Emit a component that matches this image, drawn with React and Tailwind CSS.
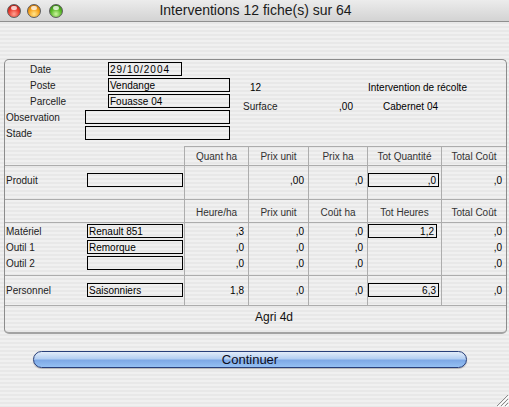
import React from "react";

const grid = "grid grid-cols-[179px_64px_60px_59px_74px_65px]";

function Box({ w, right, className = "", children }) {
  return (
    <div
      className={`h-[14px] border border-black flex items-center pt-[1px] text-[10px] leading-none text-black ${
        right ? "justify-end pr-[2px]" : "pl-[1px]"
      } ${w} ${className}`}
    >
      {children}
    </div>
  );
}

function Cell({ i, top = true, className = "", children }) {
  return (
    <div
      className={`${top ? "border-t" : ""} ${i > 0 ? "border-l" : ""} border-[#adadad] ${className}`}
    >
      {children}
    </div>
  );
}

function Light({ color }) {
  return (
    <span
      className={`relative block w-[14px] h-[14px] rounded-full border border-[#5e5e5e] ${color}`}
    >
      <span className="absolute left-[3px] top-[1px] w-[6px] h-[4px] rounded-full bg-white/75" />
    </span>
  );
}

const head = "flex items-center justify-center text-[10px] text-[#333]";
const num = "flex items-center justify-end pr-[4px] text-[10px] text-black";

function BodyRow({ label, box, values, tot, h, top }) {
  const extra = h === "last" ? "h-[20px] pb-[4px]" : top ? "h-[17px]" : "h-[16px]";
  return (
    <div className={grid}>
      <Cell i={0} top={top} className={`${extra} flex items-center`}>
        <span className="w-[82px] pl-[1px] text-[10px] text-[#222]">{label}</span>
        <Box w="w-[96px]">{box}</Box>
      </Cell>
      {values.map((v, k) => (
        <Cell key={k} i={k + 1} top={top} className={`${extra} ${num}`}>
          {k === 3 ? (
            tot !== undefined ? (
              <Box w="w-[71px]" right className="mr-auto">
                {tot}
              </Box>
            ) : null
          ) : (
            v
          )}
        </Cell>
      ))}
    </div>
  );
}

export default function App() {
  return (
    <div
      className="relative w-[509px] h-[407px] overflow-hidden bg-[repeating-linear-gradient(to_bottom,#f0f0f0_0px,#f0f0f0_2px,#e8e8e8_2px,#e8e8e8_4px)]"
      style={{ fontFamily: '"Liberation Sans", Arial, sans-serif' }}
    >
      {/* title bar */}
      <div className="h-[22px] border-b border-[#8f8f8f] bg-linear-to-b from-[#ececec] to-[#d3d3d3] flex items-center relative">
        <div className="flex items-center pl-[7px] pt-[1px]">
          <Light color="bg-[radial-gradient(circle_at_50%_75%,#ffa494_0%,#ea3a2e_50%,#9c110a_100%)]" />
          <span className="ml-[6px]">
            <Light color="bg-[radial-gradient(circle_at_50%_75%,#ffe68f_0%,#f7a11a_50%,#b35f00_100%)]" />
          </span>
          <span className="ml-[8px]">
            <Light color="bg-[radial-gradient(circle_at_50%_75%,#cdf59f_0%,#58b826_50%,#2a720a_100%)]" />
          </span>
        </div>
        <div className="absolute inset-0 flex items-center justify-center text-[14px] text-[#1a1a1a] pl-[2px]">
          Interventions 12 fiche(s) sur 64
        </div>
      </div>

      {/* panel */}
      <div className="mt-[37px] ml-[4px] w-[503px] rounded-[5px] border border-[#8c8c8c] border-b-2 border-b-[#a3a3a3]">
        <div className="h-[86px] pt-[2px] flex flex-col gap-[2px] text-[10px] text-[#222]">
          <div className="h-[14px] flex items-center">
            <span className="w-[103px] pl-[25px]">Date</span>
            <Box w="w-[74px]" className="tracking-[1px]">29/10/2004</Box>
          </div>
          <div className="h-[14px] flex items-center">
            <span className="w-[103px] pl-[25px]">Poste</span>
            <Box w="w-[122px]">Vendange</Box>
            <span className="ml-[20px] w-[118px] translate-y-[2px] text-black">12</span>
            <span className="translate-y-[2px] text-black">Intervention de récolte</span>
          </div>
          <div className="h-[14px] flex items-center">
            <span className="w-[103px] pl-[25px]">Parcelle</span>
            <Box w="w-[122px]">Fouasse 04</Box>
            <span className="ml-[13px] w-[60px] translate-y-[5px]">Surface</span>
            <span className="w-[50px] text-right translate-y-[5px] text-black">,00</span>
            <span className="ml-[30px] translate-y-[5px] text-black">Cabernet 04</span>
          </div>
          <div className="h-[14px] flex items-center">
            <span className="w-[80px] pl-[1px]">Observation</span>
            <Box w="w-[145px]" />
          </div>
          <div className="h-[14px] flex items-center">
            <span className="w-[80px] pl-[1px]">Stade</span>
            <Box w="w-[145px]" />
          </div>
        </div>

        {/* products */}
        <div className={grid}>
          <Cell i={0} top={false} className="h-[19px]" />
          {["Quant ha", "Prix unit", "Prix ha", "Tot Quantité", "Total Coût"].map((t, k) => (
            <Cell key={t} i={k + 1} className={`h-[19px] ${head}`}>
              {t}
            </Cell>
          ))}
        </div>
        <div className={grid}>
          <Cell i={0} className="h-[34px] flex items-start pt-[7px]">
            <span className="w-[82px] pl-[1px] h-[14px] flex items-center text-[10px] text-[#222]">Produit</span>
            <Box w="w-[96px]" />
          </Cell>
          <Cell i={1} className="h-[34px]" />
          <Cell i={2} className="h-[34px] pt-[7px]">
            <div className={`h-[14px] ${num}`}>,00</div>
          </Cell>
          <Cell i={3} className="h-[34px] pt-[7px]">
            <div className={`h-[14px] ${num}`}>,0</div>
          </Cell>
          <Cell i={4} className="h-[34px] pt-[7px]">
            <Box w="w-[71px]" right>,0</Box>
          </Cell>
          <Cell i={5} className="h-[34px] pt-[7px]">
            <div className={`h-[14px] ${num}`}>,0</div>
          </Cell>
        </div>

        {/* equipment */}
        <div className={grid}>
          <Cell i={0} className="h-[23px]" />
          {["Heure/ha", "Prix unit", "Coût ha", "Tot Heures", "Total Coût"].map((t, k) => (
            <Cell key={t} i={k + 1} className={`h-[23px] pt-[3px] ${head}`}>
              {t}
            </Cell>
          ))}
        </div>
        <BodyRow top label="Matériel" box="Renault 851" values={[",3", ",0", ",0", "", ",0"]} tot="1,2" />
        <BodyRow top={false} label="Outil 1" box="Remorque" values={[",0", ",0", ",0", "", ",0"]} />
        <BodyRow top={false} h="last" label="Outil 2" box="" values={[",0", ",0", ",0", "", ",0"]} />

        {/* staff */}
        <div className={grid}>
          <Cell i={0} className="h-[30px] flex items-start pt-[7px]">
            <span className="w-[82px] pl-[1px] h-[14px] flex items-center text-[10px] text-[#222]">Personnel</span>
            <Box w="w-[96px]">Saisonniers</Box>
          </Cell>
          {["1,8", ",0", ",0", "tot", ",0"].map((v, k) => (
            <Cell key={k} i={k + 1} className="h-[30px] pt-[7px]">
              {v === "tot" ? (
                <Box w="w-[71px]" right>6,3</Box>
              ) : (
                <div className={`h-[14px] ${num}`}>{v}</div>
              )}
            </Cell>
          ))}
        </div>

        <div className="h-[27px] border-t border-[#adadad] pl-[250px] pt-[2px] text-[12px] text-[#111]">
          Agri 4d
        </div>
      </div>

      {/* button */}
      <div className="mt-[17px] ml-[33px] w-[434px] h-[17px] rounded-full border border-[#283f7a] bg-[linear-gradient(to_bottom,#e2ecf9_0%,#b4cff2_45%,#7ea9e6_55%,#94c0f3_100%)] flex items-center justify-center text-[13px] text-[#0c0c20] shadow-[0_1px_1px_rgba(0,0,0,0.25)]">
        Continuer
      </div>

      {/* resize grip */}
      <svg className="absolute right-0 bottom-0" width="14" height="14" viewBox="0 0 14 14">
        <path d="M13 2 L2 13 M13 6 L6 13 M13 10 L10 13" stroke="#8a8a8a" strokeWidth="1" />
        <path d="M14 3 L3 14 M14 7 L7 14 M14 11 L11 14" stroke="#ffffff" strokeWidth="1" />
      </svg>
    </div>
  );
}
